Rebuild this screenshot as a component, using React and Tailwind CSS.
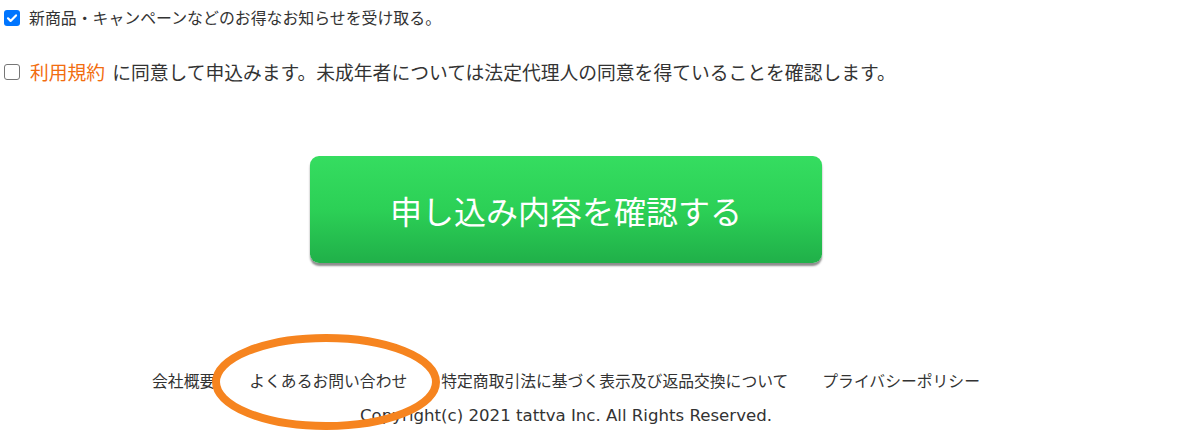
const FOOTER_LINKS = [
  '会社概要',
  'よくあるお問い合わせ',
  '特定商取引法に基づく表示及び返品交換について',
  'プライバシーポリシー',
]

function Check({ checked }) {
  if (checked) {
    return (
      <span className="w-[16px] h-[16px] shrink-0 rounded-[3px] bg-[#0075ff] flex items-center justify-center">
        <svg width="12" height="12" viewBox="0 0 12 12">
          <path d="M2 6.3l2.6 2.6L10 3.4" fill="none" stroke="white" strokeWidth="2.2" strokeLinecap="round" strokeLinejoin="round" />
        </svg>
      </span>
    )
  }
  return <span className="w-[16px] h-[16px] shrink-0 rounded-[3px] border border-[#767676] bg-white" />
}

export default function App() {
  return (
    <div
      className="relative w-[1132px] h-[446px] bg-white text-[#333]"
      style={{ fontFamily: '"Noto Sans CJK JP", "Noto Sans", sans-serif' }}
    >
      <div className="pt-[7px] pl-[4px]">
        <label className="flex items-center h-[22px] text-[15.9px] leading-none">
          <Check checked />
          <span className="ml-[9px]">新商品・キャンペーンなどのお得なお知らせを受け取る。</span>
        </label>

        <label className="flex items-center h-[22px] mt-[32px] text-[18.8px] leading-none">
          <Check />
          <span className="ml-[10px] text-[#f26d0f]">利用規約</span>
          <span className="ml-[7px]">
            に同意して申込みます。未成年者については法定代理人の同意を得ていることを確認します。
          </span>
        </label>
      </div>

      <div className="flex justify-center mt-[73px]">
        <button className="w-[512px] h-[107px] rounded-[9px] bg-gradient-to-b from-[#35dd60] via-[#2cd056] to-[#20b049] shadow-[0_3px_2px_rgba(0,0,0,0.45)] text-white text-[32px] leading-none">
          申し込み内容を確認する
        </button>
      </div>

      <div className="flex flex-col items-center mt-[110px]">
        <div className="flex gap-[34px] text-[15.8px] leading-none">
          {FOOTER_LINKS.map((l) => (
            <span key={l}>{l}</span>
          ))}
        </div>
        <div className="mt-[19px] text-[16.6px] leading-none" style={{ fontFamily: '"DejaVu Sans", sans-serif' }}>
          Copyright(c) 2021 tattva Inc. All Rights Reserved.
        </div>
      </div>

      <svg className="absolute left-[210px] top-[332px] pointer-events-none" width="232" height="100" viewBox="0 0 232 100">
        <ellipse cx="116" cy="50" rx="110" ry="44" fill="none" stroke="#f6841f" strokeWidth="8" />
      </svg>
    </div>
  )
}
